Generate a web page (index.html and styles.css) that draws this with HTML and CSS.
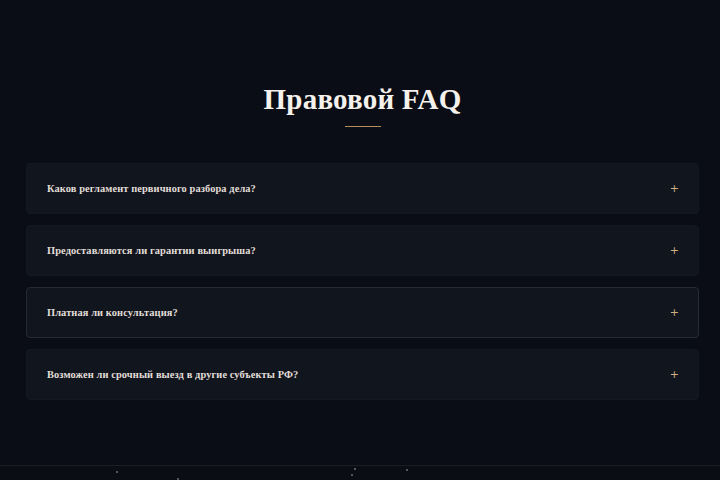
FILE: index.html
```html
<!DOCTYPE html>
<html lang="ru">
<head>
    <meta charset="UTF-8">
    <meta name="viewport" content="width=device-width, initial-scale=1.0">
    <title>Правовой FAQ</title>
    <link rel="stylesheet" href="styles.css">
</head>
<body>
    <section class="faq">
        <h2 class="faq-title">Правовой FAQ</h2>
        <div class="faq-divider"></div>

        <div class="faq-list">
            <div class="faq-item">
                <span class="faq-question">Каков регламент первичного разбора дела?</span>
                <span class="faq-toggle">+</span>
            </div>
            <div class="faq-item">
                <span class="faq-question">Предоставляются ли гарантии выигрыша?</span>
                <span class="faq-toggle">+</span>
            </div>
            <div class="faq-item active">
                <span class="faq-question">Платная ли консультация?</span>
                <span class="faq-toggle">+</span>
            </div>
            <div class="faq-item">
                <span class="faq-question">Возможен ли срочный выезд в другие субъекты РФ?</span>
                <span class="faq-toggle">+</span>
            </div>
        </div>
    </section>

    <footer class="footer">
        <span class="dot" style="left: 116px; top: 5px;"></span>
        <span class="dot" style="left: 177px; top: 12px;"></span>
        <span class="dot" style="left: 354px; top: 2px;"></span>
        <span class="dot" style="left: 351px; top: 8px;"></span>
        <span class="dot" style="left: 406px; top: 3px;"></span>
    </footer>
</body>
</html>
```

FILE: styles.css
```css
* {
    margin: 0;
    padding: 0;
    box-sizing: border-box;
}

html, body {
    height: 100%;
}

body {
    font-family: 'Liberation Serif', 'Times New Roman', serif;
    background: #0a0d15;
    color: #e6e2dc;
    overflow: hidden;
    display: flex;
    flex-direction: column;
}

.faq {
    padding: 81px 21px 0 26px;
    height: 465px;
}

.faq-title {
    text-align: center;
    font-size: 29px;
    font-weight: bold;
    color: #f4f1ec;
    line-height: 36px;
    letter-spacing: 0.2px;
}

.faq-divider {
    width: 36px;
    height: 1px;
    background: #b58c5a;
    margin: 9px auto 36px;
}

.faq-list {
    display: flex;
    flex-direction: column;
    gap: 11px;
}

.faq-item {
    display: flex;
    justify-content: space-between;
    align-items: center;
    height: 51px;
    padding: 0 19px 0 20px;
    background: #11151e;
    border: 1px solid #141821;
    border-radius: 4px;
}

.faq-item.active {
    border-color: #262a34;
}

.faq-question {
    font-size: 10.4px;
    font-weight: bold;
    color: #e2ded8;
    letter-spacing: 0.1px;
}

.faq-toggle {
    font-family: 'DejaVu Sans', sans-serif;
    font-size: 11px;
    color: #cfae80;
}

.footer {
    position: relative;
    flex: 1;
    border-top: 1px solid #1a1e1d;
    background: #0a0d14;
}

.dot {
    position: absolute;
    width: 2px;
    height: 2px;
    border-radius: 50%;
    background: #6c707a;
}
```
